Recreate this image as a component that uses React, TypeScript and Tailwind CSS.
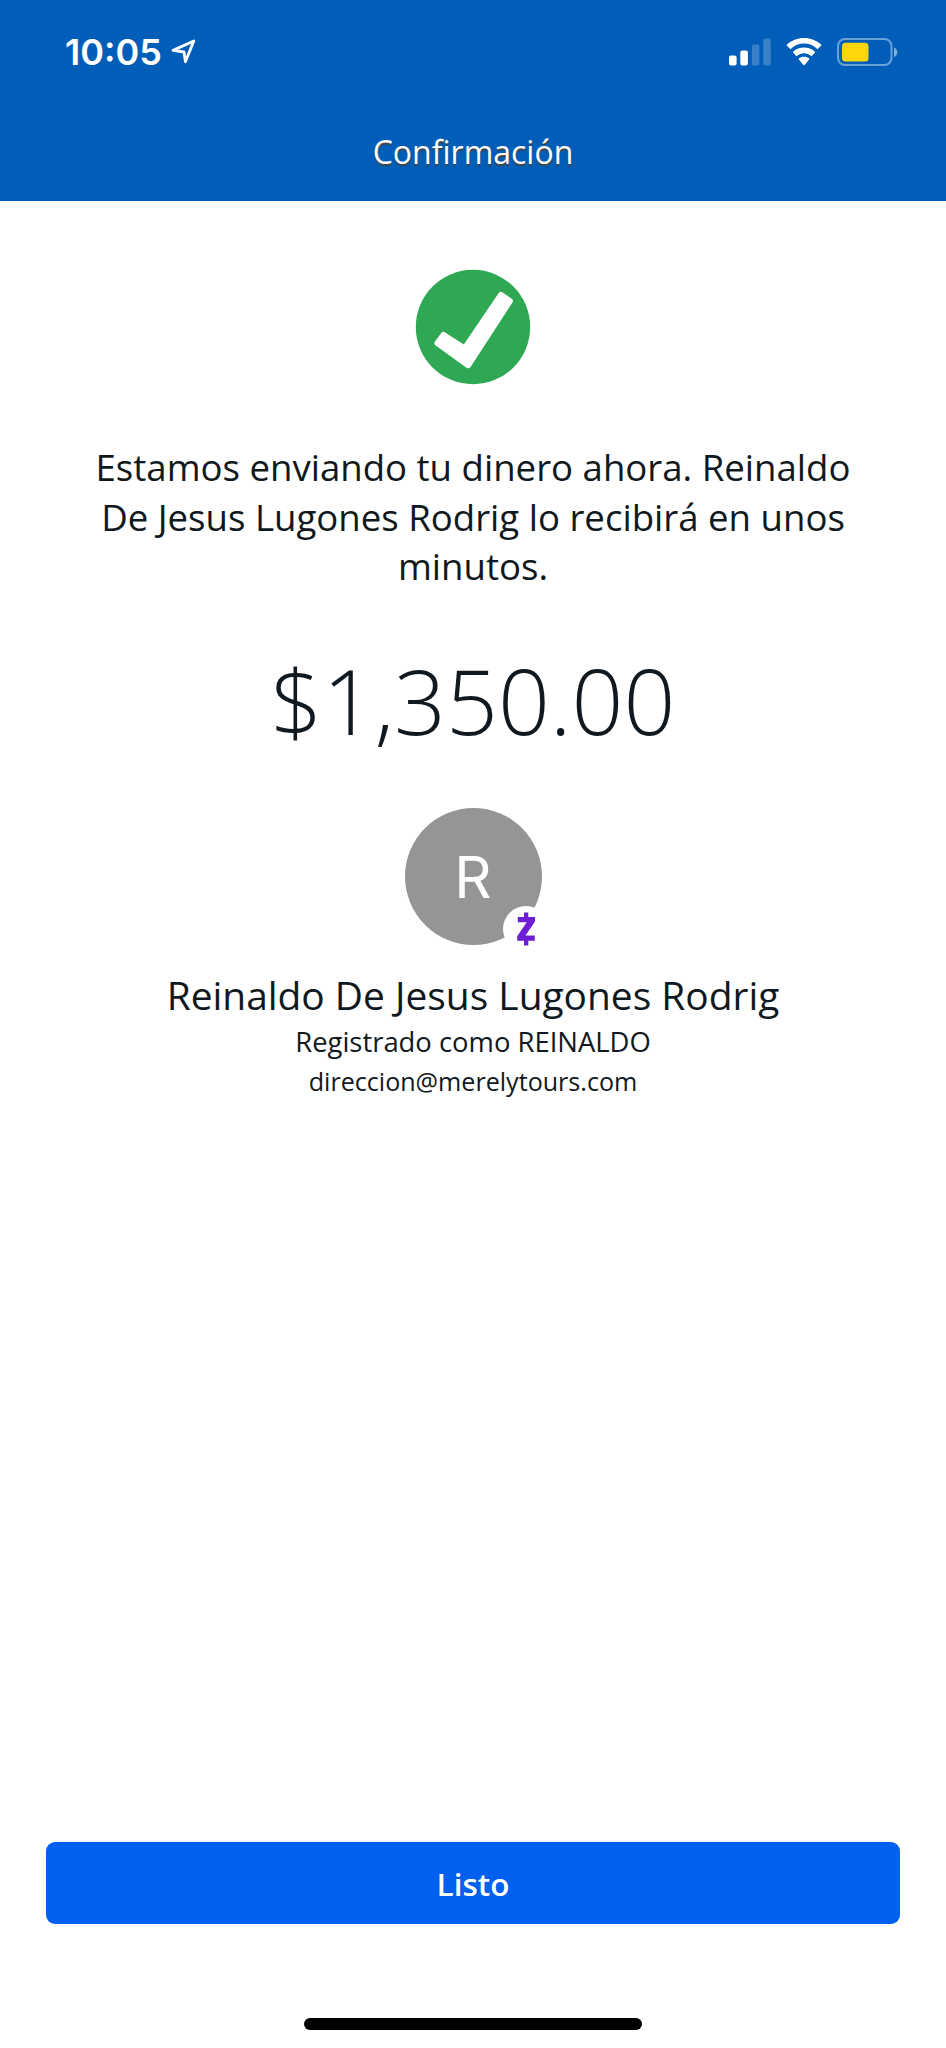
type Recipient = {
    name: string;
    registeredAs: string;
    email: string;
};

const recipient: Recipient = {
    name: 'Reinaldo De Jesus Lugones Rodrig',
    registeredAs: 'REINALDO',
    email: 'direccion@merelytours.com',
};

function LocationArrow() {
    return (
        <svg width="28" height="28" viewBox="0 0 28 28" fill="none" className="ml-[8px]">
            <path d="M3 12.400 23.800 3 15.400 23.800 14 14Z" stroke="white" strokeWidth="2.8" strokeLinejoin="round" />
        </svg>
    );
}

function SignalBars() {
    return (
        <svg width="42" height="28" viewBox="0 0 42 28" fill="white">
            <rect x="0" y="17.500" width="7.6" height="10" rx="2" />
            <rect x="11.3" y="12.500" width="7.6" height="15" rx="2" />
            <rect x="22.8" y="6.500" width="7.6" height="21" rx="2" opacity=".22" />
            <rect x="34.2" y="0.500" width="7.6" height="27" rx="2" opacity=".22" />
        </svg>
    );
}

function WifiIcon() {
    return (
        <svg width="38" height="28" viewBox="0 0 38 28" fill="white">
            <path d="M19 5.6c5 0 9.600 1.900 13 5.200.3.300.700.300 1 0l3.100-3.100c.3-.3.300-.8 0-1.100C31.500 2.400 25.500 0 19 0S6.500 2.400 1.900 6.600c-.3.300-.3.800 0 1.100L5 10.800c.3.300.7.300 1 0 3.400-3.300 8-5.200 13-5.200Z" />
            <path d="M19 15.200c2.600 0 5 .9 6.800 2.500.3.300.8.300 1.100 0l2.900-3c.3-.3.300-.8 0-1.100C26.900 11 23.100 9.500 19 9.500s-7.900 1.500-10.800 4.100c-.3.300-.3.800 0 1.100l2.900 3c.3.300.8.300 1.100 0 1.800-1.600 4.200-2.500 6.800-2.500Z" />
            <path d="M24.200 21.400c.3-.3.300-.8 0-1-1.400-1.100-3.200-1.700-5.200-1.700s-3.800.6-5.200 1.700c-.3.200-.3.700 0 1l4.600 5.700c.3.400.9.400 1.200 0Z" />
        </svg>
    );
}

function BatteryIcon() {
    return (
        <svg width="61" height="28" viewBox="0 0 61 28" fill="none">
            <rect x="1" y="1" width="53.500" height="26" rx="7" stroke="white" strokeOpacity=".42" strokeWidth="2" />
            <rect x="5" y="4.700" width="26.500" height="18.800" rx="3.500" fill="#ffd60a" />
            <path d="M57 9.500c2 .8 3.300 2.600 3.300 4.800S59 18.300 57 19.100Z" fill="white" fillOpacity=".5" />
        </svg>
    );
}

function Header() {
    return (
        <header className="h-[201px] bg-[#005eb8] text-white">
            <div className="flex h-[103px] items-center pl-[65px] pr-[48px]">
                <span className="font-['Inter',sans-serif] text-[36px] font-semibold leading-none">10:05</span>
                <LocationArrow />
                <div className="ml-auto flex items-center">
                    <SignalBars />
                    <span className="ml-[14px]"><WifiIcon /></span>
                    <span className="ml-[14px]"><BatteryIcon /></span>
                </div>
            </div>
            <h1 className="text-center text-[32px] leading-[98px] [text-shadow:0_2px_1px_#444]">Confirmación</h1>
        </header>
    );
}

function SuccessMark() {
    return (
        <svg width="116" height="116" viewBox="0 0 116 116" className="mt-[68px]">
            <circle cx="58" cy="58" r="57.200" fill="#2ea852" />
            <path
                d="M22.500 74 28.500 66 49.600 79.600 86 26 94.800 32 53.200 96.200Z"
                fill="white"
                stroke="white"
                strokeWidth="6"
                strokeLinejoin="round"
            />
        </svg>
    );
}

function Avatar({ initial }: { initial: string }) {
    return (
        <div className="relative mt-[58px] flex h-[137px] w-[137px] items-center justify-center rounded-full bg-[#959595]">
            <span className="pt-0.5 font-['Inter',sans-serif] text-[58px] leading-none text-white">{initial}</span>
            {/* Zelle badge */}
            <div className="absolute left-[98px] top-[98px] flex h-[46px] w-[46px] items-center justify-center rounded-full bg-white">
                <svg width="18" height="34" viewBox="0 0 18 34" fill="#6d1ed4">
                    <path d="M7 .500h4.300v4.500h6.700v4.500L8.500 23.500h9.300v5.200h-6.500v4.800H7v-4.800H.200v-4.500l9.500-14H.800V5H7Z" />
                </svg>
            </div>
        </div>
    );
}

export default function App() {
    return (
        <div className="flex h-[2048px] w-[946px] flex-col bg-white font-['Open_Sans',sans-serif] text-[#101820]">
            <Header />

            <main className="flex flex-1 flex-col items-center">
                <SuccessMark />
                <p className="mt-[58px] w-[800px] text-center text-[36.6px] leading-[49.5px]">
                    Estamos enviando tu dinero ahora. Reinaldo De Jesus Lugones Rodrig lo recibirá en unos minutos.
                </p>
                <div className="mt-[58px] text-[91px] font-light leading-[100px]">$1,350.00</div>
                <Avatar initial={recipient.name[0]} />
                <h2 className="mt-[25px] text-[38.9px] leading-[50px]">{recipient.name}</h2>
                <p className="mt-0.5 text-[27.4px] leading-[40px]">Registrado como {recipient.registeredAs}</p>
                <p className="text-[25.1px] leading-[38px]">{recipient.email}</p>
            </main>

            <footer className="flex flex-col items-center px-[46px] pb-[18px]">
                <button className="h-[82px] w-full rounded-[9px] bg-[#0060f0] pt-0.5 text-[31.5px] font-semibold text-white">
                    Listo
                </button>
                <div className="mt-[94px] h-3 w-[338px] rounded-full bg-black" />
            </footer>
        </div>
    );
}
